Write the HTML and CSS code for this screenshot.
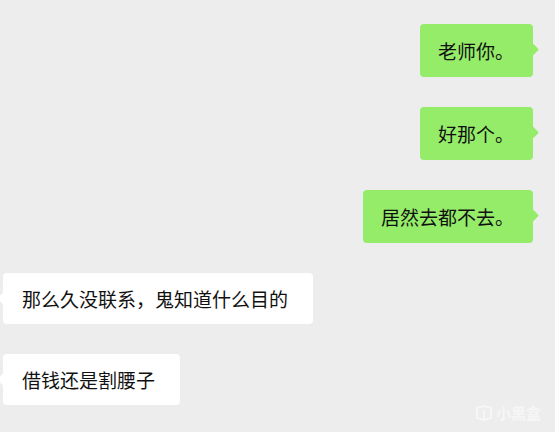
FILE: index.html
```html
<!DOCTYPE html>
<html lang="zh">
<head>
<meta charset="utf-8">
<link rel="stylesheet" href="styles.css">
</head>
<body>
<div class="chat">
  <div class="row me"><div class="bubble green">老师你。</div></div>
  <div class="row me"><div class="bubble green">好那个。</div></div>
  <div class="row me"><div class="bubble green">居然去都不去。</div></div>
  <div class="row them"><div class="bubble white">那么久没联系，鬼知道什么目的</div></div>
  <div class="row them"><div class="bubble white">借钱还是割腰子</div></div>
</div>
<div class="watermark">
  <svg class="wm-logo" width="18" height="16" viewBox="0 0 18 16"><path d="M2 3 L9 1 L16 3 L16 13 L9 15 L2 13 Z" fill="none" stroke="#fff" stroke-width="2"/><path d="M9 5 V15" stroke="#fff" stroke-width="2"/></svg>
  <span class="wm-text">小黑盒</span>
</div>
</body>
</html>
```
FILE: styles.css
```css
html, body {
  margin: 0;
  padding: 0;
}
body {
  background: #ededed;
  width: 555px;
  height: 432px;
  overflow: hidden;
  position: relative;
  font-family: "Noto Sans CJK SC", "Microsoft YaHei", sans-serif;
}
.chat {
  display: flex;
  flex-direction: column;
  gap: 30px;
  padding-top: 24px;
}
.row {
  display: flex;
}
.row.me {
  justify-content: flex-end;
  padding-right: 22px;
}
.row.them {
  justify-content: flex-start;
  padding-left: 3px;
}
.bubble {
  position: relative;
  font-size: 19px;
  line-height: 27px;
  padding: 13px 19px 13px 18px;
  border-radius: 4px;
  color: #111;
  white-space: nowrap;
}
.bubble.green {
  background: #95ec69;
}
.bubble.white {
  background: #ffffff;
  padding: 12px 25px 12px 19px;
}
.bubble::after {
  content: "";
  position: absolute;
  top: 21px;
  width: 9px;
  height: 9px;
  transform: rotate(45deg);
  border-radius: 1px;
}
.bubble.green::after {
  right: -4px;
  background: #95ec69;
}
.bubble.white::after {
  left: -4px;
  background: #ffffff;
}
.watermark {
  position: absolute;
  right: 14px;
  bottom: 11px;
  display: flex;
  align-items: center;
  gap: 3px;
  opacity: 0.55;
}
.wm-text {
  color: #fff;
  font-size: 15px;
  line-height: 16px;
  font-weight: bold;
}
```
